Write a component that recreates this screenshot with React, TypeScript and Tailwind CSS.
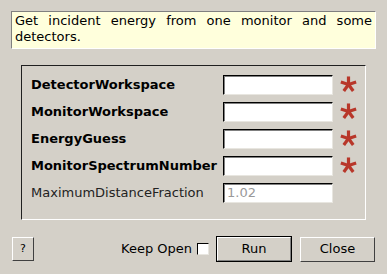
import React from 'react';

const fields = [
  { label: 'DetectorWorkspace', required: true, value: '' },
  { label: 'MonitorWorkspace', required: true, value: '' },
  { label: 'EnergyGuess', required: true, value: '' },
  { label: 'MonitorSpectrumNumber', required: true, value: '' },
  { label: 'MaximumDistanceFraction', required: false, value: '1.02' },
];

function Star() {
  // five thick arms, like the bold red asterisk Qt draws for mandatory fields
  const arms = [0, 72, 144, 216, 288];
  return (
    <svg width="17" height="17" viewBox="-9 -9 18 18">
      {arms.map((a) => (
        <rect key={a} x={-1.7} y={-8.5} width={3.4} height={8.5} fill="#b8372a" transform={`rotate(${a})`} />
      ))}
    </svg>
  );
}

export default function App() {
  return (
    <div className="w-[387px] h-[274px] bg-[#d4d0c8] font-['DejaVu_Sans',sans-serif] text-[13px] text-black overflow-hidden">
      {/* Description */}
      <div className="ml-[11px] mt-[11px] w-[365px] h-[38px] bg-[#ffffdc] border-t border-l border-[#808080] border-b-white border-r-white border-b border-r px-[3px] pt-[1px] leading-[16px] text-justify">
        Get incident energy from one monitor and some detectors.
      </div>

      {/* Property group */}
      <div className="ml-[21px] mt-[16px] w-[345px] h-[155px] border-t border-l border-[#202020] border-b border-r border-b-white border-r-white pl-[9px] pt-[9px]">
        <div className="flex flex-col gap-[7px]">
          {fields.map((f) => (
            <div key={f.label} className="flex items-center h-[20px]">
              <div className={`w-[192px] ${f.required ? 'font-bold' : 'text-[#222]'}`}>{f.label}</div>
              <div className="w-[110px] h-[20px] bg-white border-t border-l border-black border-b border-r border-b-[#e8e6e0] border-r-[#e8e6e0] shadow-[inset_1px_1px_0_#808080] px-[3px] leading-[17px] text-[#999]">
                {f.value}
              </div>
              {f.required && (
                <div className="ml-[7px] -mt-[1px]">
                  <Star />
                </div>
              )}
            </div>
          ))}
        </div>
      </div>

      {/* Bottom buttons */}
      <div className="flex items-center mt-[16px] pl-[12px]">
        <div className="w-[22px] h-[24px] border-t border-l border-white border-b border-r border-b-[#404040] border-r-[#404040] flex items-center justify-center text-[11px]">
          ?
        </div>
        <div className="ml-auto flex items-center">
          <span className="mr-[5px]">Keep Open</span>
          <div className="w-[12px] h-[12px] bg-white border-t border-l border-black border-b border-r border-b-[#e8e6e0] border-r-[#e8e6e0]" />
          <div className="ml-[7px] w-[76px] h-[26px] border border-black flex">
            <div className="flex-1 border-t border-l border-white border-b border-r border-b-[#808080] border-r-[#808080] flex items-center justify-center">
              Run
            </div>
          </div>
          <div className="ml-[8px] mr-[12px] w-[75px] h-[25px] border-t border-l border-white border-b border-r border-b-[#404040] border-r-[#404040] flex items-center justify-center">
            Close
          </div>
        </div>
      </div>
    </div>
  );
}
